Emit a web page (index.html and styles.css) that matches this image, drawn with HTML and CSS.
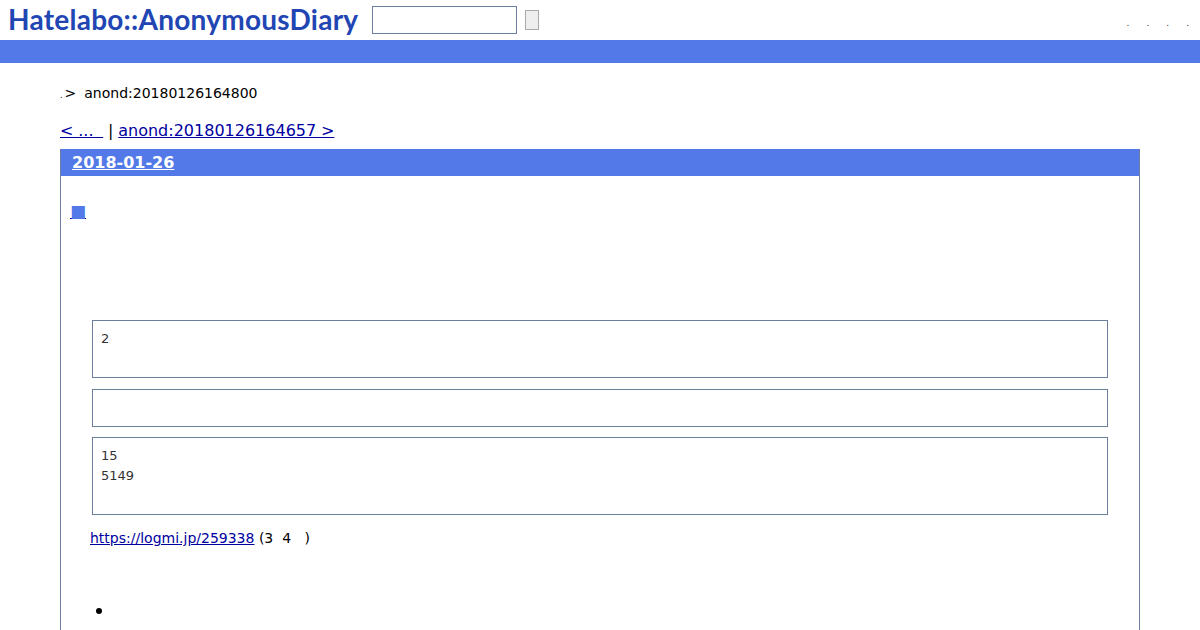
FILE: index.html
```html
<!DOCTYPE html>
<html lang="ja">
<head>
    <meta charset="UTF-8">
    <title>anond:20180126164800</title>
    <link rel="stylesheet" href="styles.css">
</head>
<body>

    <div class="header">
        <a class="logo" href="#">Hatelabo::AnonymousDiary</a>
        <input class="search-input" type="text">
        <button class="search-button"></button>
        <div class="header-menu">
            <a href="#">.</a>
            <a href="#">.</a>
            <a href="#">.</a>
            <a href="#">.</a>
        </div>
    </div>
    <div class="header-bar"></div>

    <div class="breadcrumb"><span class="crumb-dot">.</span><span class="crumb-sep">&gt;</span><span>anond:20180126164800</span></div>

    <div class="pager"><a href="#">&lt; ... &nbsp;</a> | <a href="#">anond:20180126164657 &gt;</a></div>

    <div class="day">
        <h2 class="day-title"><a href="#">2018-01-26</a></h2>
        <div class="day-body">
            <h3 class="section-title"><a href="#"><span class="section-mark">■</span></a></h3>

            <blockquote class="quote quote-first"><p>2</p></blockquote>
            <blockquote class="quote quote-empty"></blockquote>
            <blockquote class="quote quote-last"><p>15</p><p>5149</p></blockquote>

            <p class="source"><a href="https://logmi.jp/259338">https://logmi.jp/259338</a> (3&nbsp;&nbsp;4&nbsp;&nbsp;&nbsp;)</p>

            <ul class="list">
                <li></li>
            </ul>
        </div>
    </div>

</body>
</html>
```

FILE: styles.css
```css
/* page */
html, body {
    height: 630px;
    overflow: hidden;
}

body {
    margin: 0;
    padding: 0;
    font-family: "DejaVu Sans", sans-serif;
    font-size: 14px;
    color: #000;
    background-color: #fff;
}

a {
    color: #0000a0;
}

/* header */
.header {
    display: flex;
    align-items: center;
    height: 40px;
    padding-left: 8px;
}

.logo {
    width: 364px;
    margin-top: -3px;
    font-family: Lato, sans-serif;
    font-size: 28px;
    font-weight: 700;
    letter-spacing: 0.25px;
    color: #2146b4;
    text-decoration: none;
    white-space: nowrap;
}

.search-input {
    box-sizing: border-box;
    width: 145px;
    height: 28px;
    margin: 0;
    padding: 0;
    border: 1px solid #6b7f9c;
    background-color: #fff;
}

.search-button {
    box-sizing: border-box;
    width: 14px;
    height: 20px;
    margin: 0 0 0 8px;
    padding: 0;
    border: 1px solid #a9a9a9;
    background-color: #efefef;
}

.header-menu {
    display: flex;
    gap: 17px;
    margin-top: 6px;
    margin-left: auto;
    margin-right: 11px;
    font-size: 9px;
}

.header-menu a {
    color: #333;
    text-decoration: none;
}

.header-bar {
    height: 23px;
    background-color: #5279e7;
}

/* breadcrumb */
.breadcrumb {
    display: flex;
    margin: 21px 60px 0;
    line-height: 18px;
}

.crumb-dot {
    font-size: 8px;
    line-height: 24px;
}

.crumb-sep {
    margin-left: 2px;
    margin-right: 8px;
}

.pager {
    margin: 13px 60px 0;
    font-size: 16px;
    line-height: 20px;
    word-spacing: -0.25px;
}

/* day */
.day {
    box-sizing: border-box;
    height: 481px;
    margin: 8px 60px 0;
    border-left: 1px solid #6b7f9c;
    border-right: 1px solid #6b7f9c;
    overflow: hidden;
}

.day-title {
    margin: 0;
    padding: 0 11px;
    height: 27px;
    font-size: 16px;
    line-height: 27px;
    font-weight: bold;
    background-color: #5279e7;
}

.day-title a {
    color: #fff;
}

.day-body {
    padding: 0 31px;
}

.section-title {
    margin: 23px 0 0 -22px;
    font-size: 17px;
    line-height: 24px;
    font-weight: normal;
}

.section-mark {
    color: #5279e7;
}

.quote {
    box-sizing: border-box;
    margin: 0;
    padding: 8px;
    border: 1px solid #6b7f9c;
    font-size: 13px;
    line-height: 20px;
    color: #333;
}

.quote p {
    margin: 0;
}

.quote-first {
    height: 58px;
    margin-top: 97px;
}

.quote-empty {
    height: 38px;
    margin-top: 11px;
}

.quote-last {
    height: 78px;
    margin-top: 10px;
}

.source {
    margin: 14px 0 0 -2px;
    line-height: 18px;
}

.list {
    margin: 53px 0 0;
    padding-left: 22px;
    font-size: 18px;
    line-height: 20px;
}
```
